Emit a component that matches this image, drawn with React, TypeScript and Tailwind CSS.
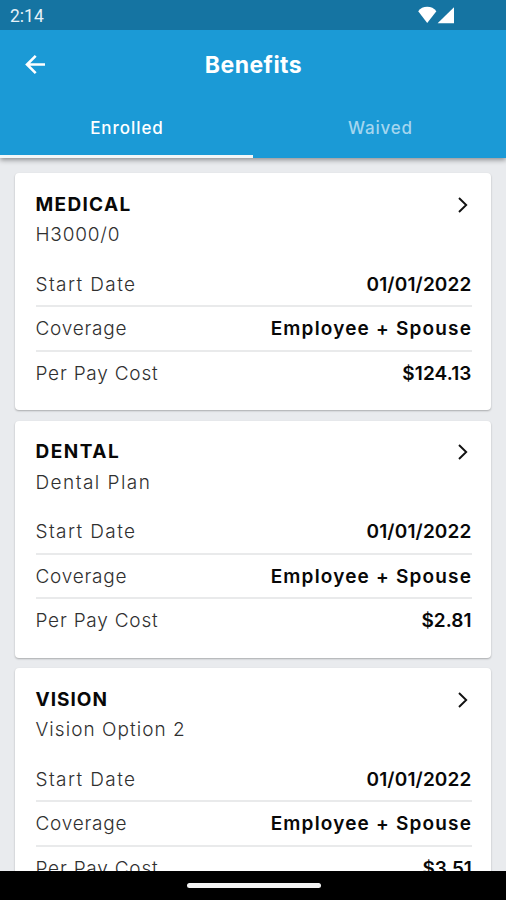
type Field = { text: string; tracking: string };

type Benefit = { name: Field; plan: Field; cost: Field };

const benefits: Benefit[] = [
  {
    name: { text: 'MEDICAL', tracking: 'tracking-[1.33px]' },
    plan: { text: 'H3000/0', tracking: 'tracking-[0.8px]' },
    cost: { text: '$124.13', tracking: 'tracking-[0.11px]' },
  },
  {
    name: { text: 'DENTAL', tracking: 'tracking-[1.5px]' },
    plan: { text: 'Dental Plan', tracking: 'tracking-[1.45px]' },
    cost: { text: '$2.81', tracking: 'tracking-[0.02px]' },
  },
  {
    name: { text: 'VISION', tracking: 'tracking-[1.01px]' },
    plan: { text: 'Vision Option 2', tracking: 'tracking-[1.04px]' },
    cost: { text: '$3.51', tracking: 'tracking-[-0.2px]' },
  },
];

function BackArrow() {
  return (
    <svg className="h-6 w-6" viewBox="0 0 24 24" fill="none" stroke="currentColor" strokeWidth="2.6">
      <path d="M22 11.5H4.2M12.7 2.8L4 11.5L12.7 20.2" />
    </svg>
  );
}

function Chevron() {
  return (
    <svg className="h-4 w-3" viewBox="0 0 12 16" fill="none" stroke="#111" strokeWidth="1.9">
      <path d="M2 1L9.2 8L2 15" />
    </svg>
  );
}

function StatusBar() {
  return (
    <div className="z-20 flex h-[30px] shrink-0 items-center justify-between bg-[#1574a2] pl-[10px] pr-[51px] text-[#e6f2f8]">
      <span className="pt-[2px] font-['Roboto',sans-serif] text-[17.5px]">2:14</span>
      <svg className="h-[18px] w-[38px]" viewBox="0 0 38 18" fill="white">
        <path d="M1.2 5.2Q4.5 .8 10.2 .8T19.4 5.2L10.2 17Z" />
        <path d="M37 1.2V17.3H20.6Z" />
      </svg>
    </div>
  );
}

function Row({ label, labelTracking, value, valueTracking, last }: {
  label: string;
  labelTracking: string;
  value: string;
  valueTracking: string;
  last?: boolean;
}) {
  return (
    <div className={`flex h-[44.5px] items-center justify-between ${last ? '' : 'border-b-2 border-[#e9eaeb] pt-[2px]'}`}>
      <span className={`font-light text-[#303030] ${labelTracking}`}>{label}</span>
      <span className={`font-semibold text-[#080808] ${valueTracking}`}>{value}</span>
    </div>
  );
}

function BenefitCard({ name, plan, cost }: Benefit) {
  return (
    <section className="h-[237px] shrink-0 rounded-[4px] bg-white pl-[20.5px] pr-[19.5px] pt-4 text-[19px] shadow-[0_1px_2px_rgba(0,0,0,0.28)]">
      <div className="flex h-[30px] items-center justify-between">
        <h2 className={`pt-[2px] font-bold text-[#080808] ${name.tracking}`}>{name.text}</h2>
        <div className="pr-[3px] pt-px">
          <Chevron />
        </div>
      </div>
      <p className={`mb-[13.5px] h-[30px] font-light leading-[31px] text-[#303030] ${plan.tracking}`}>{plan.text}</p>
      <Row label="Start Date" labelTracking="tracking-[1.4px]" value="01/01/2022" valueTracking="tracking-[0.14px]" />
      <Row label="Coverage" labelTracking="tracking-[0.75px]" value="Employee + Spouse" valueTracking="tracking-[1.18px] -mr-[0.6px]" />
      <Row label="Per Pay Cost" labelTracking="tracking-[0.78px]" value={cost.text} valueTracking={cost.tracking} last />
    </section>
  );
}

export default function App() {
  return (
    <div className="flex h-[900px] w-full flex-col overflow-hidden bg-[#e9ebee] font-['Inter',sans-serif]">
      <StatusBar />
      <header className="z-10 h-[128px] shrink-0 bg-[#1b9ad6] text-white shadow-[0_2px_5px_rgba(0,0,0,0.4)]">
        <div className="grid h-[69px] grid-cols-[1fr_auto_1fr] items-center px-[23px]">
          <BackArrow />
          <h1 className="pl-px pt-px text-[23px] font-bold tracking-[0.46px]">Benefits</h1>
        </div>
        <nav className="grid h-[59px] grid-cols-2 text-[17px] font-medium">
          <div className="flex items-center justify-center border-b-[3px] border-[#f3f7f8] pl-px pt-[4px] tracking-[0.95px]">Enrolled</div>
          <div className="flex items-center justify-center border-b-[3px] border-transparent pl-[2px] pt-[4px] tracking-[0.8px] text-[#a4d6ef]">Waived</div>
        </nav>
      </header>
      <main className="flex min-h-0 flex-1 flex-col gap-[10.5px] overflow-hidden px-[15px] pt-[15px]">
        {benefits.map((benefit) => (
          <BenefitCard key={benefit.name.text} {...benefit} />
        ))}
      </main>
      <footer className="flex h-[29px] shrink-0 items-center justify-center bg-black">
        <div className="ml-px h-[5px] w-[134px] rounded-sm bg-[#f3f3f3]" />
      </footer>
    </div>
  );
}
